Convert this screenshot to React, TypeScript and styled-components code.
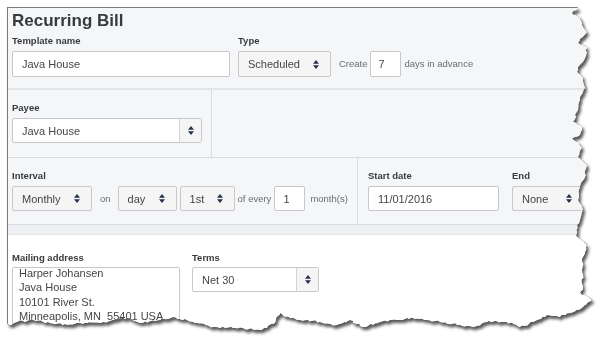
import React from "react";
import styled, { createGlobalStyle } from "styled-components";

const GlobalStyle = createGlobalStyle`
  html, body { margin: 0; padding: 0; background: #ffffff; }
  body { font-family: "Liberation Sans", Arial, sans-serif; }
  * { box-sizing: border-box; }
`;

/* ---------- torn paper edge (a drawing: clip-path polygon) ---------- */
const ORIGIN = 7;
const TORN: [number, number][] = [
  [577, 7], [578, 8], [572, 13], [580, 18], [582, 25], [587, 32], [583, 37], [578, 43],
  [587, 48], [585, 58], [578, 67], [577, 72], [583, 78], [585, 88], [580, 97], [578, 110],
  [573, 122], [582, 127], [580, 135], [572, 138], [582, 147], [578, 157], [587, 165],
  [585, 177], [580, 187], [578, 200], [583, 210], [580, 220], [577, 225], [577, 237],
  [587, 245], [583, 257], [582, 270], [583, 287], [580, 293], [592, 300], [583, 307],
  [570, 313], [560, 317], [547, 315], [533, 322], [520, 327], [507, 322], [487, 322],
  [473, 327], [460, 325], [440, 322], [427, 320], [407, 318], [397, 320], [380, 322],
  [363, 327], [350, 320], [337, 325], [320, 322], [300, 320], [290, 318], [280, 313],
  [275, 323], [260, 330], [233, 328], [213, 327], [197, 323], [187, 320], [173, 317],
  [160, 320], [140, 323], [127, 318], [113, 320], [100, 323], [80, 323], [67, 325],
  [50, 323], [33, 320], [17, 322], [10, 325], [7, 323],
];

function buildClip(): string {
  let seed = 11;
  const rand = () => {
    seed = (seed * 9301 + 49297) % 233280;
    return seed / 233280;
  };
  const out: string[] = [`0px 0px`];
  for (let i = 0; i < TORN.length - 1; i++) {
    const [x1, y1] = TORN[i];
    const [x2, y2] = TORN[i + 1];
    const len = Math.hypot(x2 - x1, y2 - y1);
    const n = Math.max(1, Math.round(len / 2.5));
    for (let k = 0; k < n; k++) {
      const t = k / n;
      let x = x1 + (x2 - x1) * t;
      let y = y1 + (y2 - y1) * t;
      if (k > 0) {
        x += (rand() - 0.5) * 2.2;
        y += (rand() - 0.5) * 2.2;
      }
      out.push(`${(x - ORIGIN).toFixed(1)}px ${(y - ORIGIN).toFixed(1)}px`);
    }
  }
  const last = TORN[TORN.length - 1];
  out.push(`${(last[0] - ORIGIN).toFixed(1)}px ${(last[1] - ORIGIN).toFixed(1)}px`);
  return `polygon(${out.join(", ")})`;
}
const CLIP = buildClip();

/* ---------- page frame ---------- */
const Stage = styled.div`
  width: 600px;
  height: 342px;
  padding: 7px 0 0 7px;
  overflow: hidden;
  background: #ffffff;
`;

const Shadow = styled.div`
  width: 592px;
  filter: drop-shadow(0.6px 0.6px 0 rgba(0, 0, 0, 0.85)) drop-shadow(2px 3px 1.8px rgba(0, 0, 0, 0.65));
`;

const Panel = styled.div`
  width: 590px;
  height: 330px;
  overflow: hidden;
  clip-path: ${CLIP};
  background: #ffffff;
  border-left: 1px solid #7a7a7a;
  border-top: 1px solid #7a7a7a;
  display: flex;
  flex-direction: column;
`;

/* ---------- sections ---------- */
const Header = styled.div`
  flex: none;
  background: #f5f6f8;
  padding: 3px 0 11px 4px;
  border-bottom: 2px solid #e3e5e9;
`;

const Title = styled.h1`
  margin: 0 0 4px;
  font-size: 17px;
  line-height: 20px;
  font-weight: 700;
  color: #393a3d;
`;

const Section = styled.div<{ $h: number }>`
  flex: none;
  display: flex;
  height: ${(p) => p.$h}px;
  background: #f5f6f8;
  border-bottom: 1px solid #d9dce0;
`;

const Cell = styled.div<{ $w?: number; $pl?: number; $divider?: boolean }>`
  ${(p) => (p.$w ? `width: ${p.$w}px; flex: none;` : `flex: 1;`)}
  padding: 12px 0 0 ${(p) => p.$pl ?? 4}px;
  ${(p) => (p.$divider ? `border-right: 1px solid #d9dce0;` : ``)}
`;

const Band = styled.div`
  flex: none;
  height: 10px;
  background: #eff0f3;
  border-bottom: 1px solid #e6e8eb;
`;

const Lower = styled.div`
  flex: 1;
  min-height: 0;
  background: #ffffff;
  padding: 17px 0 0 4px;
`;

/* ---------- fields ---------- */
const Row = styled.div<{ $top?: boolean }>`
  display: flex;
  align-items: ${(p) => (p.$top ? "flex-start" : "flex-end")};
`;

const Field = styled.div<{ $w: number; $ml?: number; $gap?: number }>`
  display: flex;
  flex-direction: column;
  gap: ${(p) => p.$gap ?? 4}px;
  width: ${(p) => p.$w}px;
  margin-left: ${(p) => p.$ml ?? 0}px;
  flex: none;
`;

const Label = styled.div`
  font-size: 9.5px;
  line-height: 12px;
  font-weight: 700;
  color: #393a3d;
  white-space: nowrap;
`;

const Hint = styled.span<{ $ml?: number; $h?: number }>`
  margin-left: ${(p) => p.$ml ?? 0}px;
  font-size: 9.5px;
  line-height: ${(p) => p.$h ?? 25}px;
  color: #6b6c72;
  white-space: nowrap;
`;

const TextBox = styled.div<{ $w?: number; $h?: number; $ml?: number; $pl?: number }>`
  ${(p) => (p.$w ? `width: ${p.$w}px;` : ``)}
  height: ${(p) => p.$h ?? 25}px;
  margin-left: ${(p) => p.$ml ?? 0}px;
  flex: none;
  display: flex;
  align-items: center;
  padding: 0 9px 0 ${(p) => p.$pl ?? 9}px;
  background: #ffffff;
  border: 1px solid #c6c8cc;
  border-radius: 2px;
  font-size: 11px;
  color: #444548;
  white-space: nowrap;
`;

const SelectBox = styled.div<{ $w: number; $h?: number; $ml?: number }>`
  width: ${(p) => p.$w}px;
  height: ${(p) => p.$h ?? 25}px;
  margin-left: ${(p) => p.$ml ?? 0}px;
  flex: none;
  display: flex;
  align-items: center;
  justify-content: space-between;
  padding: 0 11px 0 9px;
  background: #f5f5f6;
  border: 1px solid #c6c8cc;
  border-radius: 2px;
  font-size: 11px;
  color: #444548;
  white-space: nowrap;
`;

const Combo = styled.div<{ $w: number }>`
  width: ${(p) => p.$w}px;
  height: 25px;
  display: flex;
  background: #ffffff;
  border: 1px solid #c6c8cc;
  border-radius: 2px;
  font-size: 11px;
  color: #444548;
`;

const ComboText = styled.div`
  flex: 1;
  display: flex;
  align-items: center;
  padding: 0 9px;
  white-space: nowrap;
`;

const ComboButton = styled.div`
  width: 22px;
  flex: none;
  display: flex;
  align-items: center;
  justify-content: center;
  background: #f5f5f6;
  border-left: 1px solid #d2d4d8;
`;

const AddressBox = styled.div`
  width: 168px;
  height: 80px;
  padding: 0 6px;
  background: #ffffff;
  border: 1px solid #c6c8cc;
  border-radius: 2px;
  font-size: 11px;
  line-height: 14.3px;
  color: #444548;
  white-space: nowrap;
`;

const AddressLines = styled.div`
  margin-top: -2px;
`;

const ArrowSvg = styled.svg`
  flex: none;
  display: block;
  fill: #25324a;
`;

const Arrows = () => (
  <ArrowSvg width="6" height="9" viewBox="0 0 6 9">
    <path d="M0 3.7 L3 0 L6 3.7 Z M0 5.3 L3 9 L6 5.3 Z" />
  </ArrowSvg>
);

export default function App() {
  return (
    <>
      <GlobalStyle />
      <Stage>
        <Shadow>
          <Panel>
            <Header>
              <Title>Recurring Bill</Title>
              <Row>
                <Field $w={218}>
                  <Label>Template name</Label>
                  <TextBox $h={26}>Java House</TextBox>
                </Field>
                <Field $w={93} $ml={8}>
                  <Label>Type</Label>
                  <SelectBox $w={93} $h={26}>
                    Scheduled
                    <Arrows />
                  </SelectBox>
                </Field>
                <Hint $ml={8} $h={26}>Create</Hint>
                <TextBox $w={31} $h={26} $ml={2} $pl={8}>
                  7
                </TextBox>
                <Hint $ml={4} $h={26}>days in advance</Hint>
              </Row>
            </Header>

            <Section $h={68}>
              <Cell $w={204} $divider>
                <Field $w={190}>
                  <Label>Payee</Label>
                  <Combo $w={190}>
                    <ComboText>Java House</ComboText>
                    <ComboButton>
                      <Arrows />
                    </ComboButton>
                  </Combo>
                </Field>
              </Cell>
              <Cell />
            </Section>

            <Section $h={67}>
              <Cell $w={350} $divider>
                <Row>
                  <Field $w={80}>
                    <Label>Interval</Label>
                    <SelectBox $w={80}>
                      Monthly
                      <Arrows />
                    </SelectBox>
                  </Field>
                  <Hint $ml={8}>on</Hint>
                  <SelectBox $w={59} $ml={7}>
                    day
                    <Arrows />
                  </SelectBox>
                  <SelectBox $w={55} $ml={3}>
                    1st
                    <Arrows />
                  </SelectBox>
                  <Hint $ml={3}>of every</Hint>
                  <TextBox $w={31} $ml={3} $pl={8}>
                    1
                  </TextBox>
                  <Hint $ml={5}>month(s)</Hint>
                </Row>
              </Cell>
              <Cell $pl={10}>
                <Row>
                  <Field $w={131}>
                    <Label>Start date</Label>
                    <TextBox>11/01/2016</TextBox>
                  </Field>
                  <Field $w={72} $ml={13}>
                    <Label>End</Label>
                    <SelectBox $w={72}>
                      None
                      <Arrows />
                    </SelectBox>
                  </Field>
                </Row>
              </Cell>
            </Section>

            <Band />

            <Lower>
              <Row $top>
                <Field $w={168} $gap={3}>
                  <Label>Mailing address</Label>
                  <AddressBox>
                    <AddressLines>
                      Harper Johansen
                      <br />
                      Java House
                      <br />
                      10101 River St.
                      <br />
                      Minneapolis, MN&nbsp; 55401 USA
                    </AddressLines>
                  </AddressBox>
                </Field>
                <Field $w={127} $ml={12} $gap={3}>
                  <Label>Terms</Label>
                  <Combo $w={127}>
                    <ComboText>Net 30</ComboText>
                    <ComboButton>
                      <Arrows />
                    </ComboButton>
                  </Combo>
                </Field>
              </Row>
            </Lower>
          </Panel>
        </Shadow>
      </Stage>
    </>
  );
}
